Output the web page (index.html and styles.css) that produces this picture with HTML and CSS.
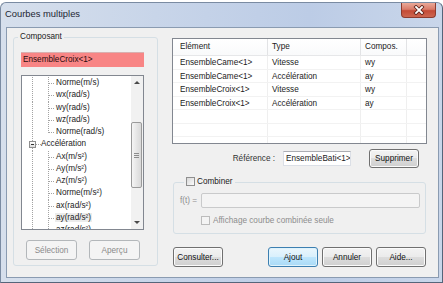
FILE: index.html
```html
<!DOCTYPE html>
<html lang="fr">
<head>
<meta charset="utf-8">
<title>Courbes multiples</title>
<link rel="stylesheet" href="styles.css">
</head>
<body>
<div class="window">
  <div class="titlebar">
    <span class="title">Courbes multiples</span>
    <div class="close">
      <svg width="12" height="10" viewBox="0 0 12 10"><path d="M3 2 L9 8 M9 2 L3 8" stroke="#5a2018" stroke-width="3.4" stroke-linecap="square" fill="none"/><path d="M3 2 L9 8 M9 2 L3 8" stroke="#ffffff" stroke-width="1.8" stroke-linecap="square" fill="none"/></svg>
    </div>
  </div>
  <div class="client">
    <div class="group composant">
      <span class="group-label">Composant</span>
      <div class="selected-field">EnsembleCroix&lt;1&gt;</div>
      <div class="tree">
        <div class="tree-items">
          <div class="trow child">Norme(m/s)</div>
          <div class="trow child">wx(rad/s)</div>
          <div class="trow child">wy(rad/s)</div>
          <div class="trow child">wz(rad/s)</div>
          <div class="trow child last">Norme(rad/s)</div>
          <div class="trow parent"><span class="expander"></span><span class="ptext">Accélération</span></div>
          <div class="trow child">Ax(m/s²)</div>
          <div class="trow child">Ay(m/s²)</div>
          <div class="trow child">Az(m/s²)</div>
          <div class="trow child">Norme(m/s²)</div>
          <div class="trow child">ax(rad/s²)</div>
          <div class="trow child"><span class="focus">ay(rad/s²)</span></div>
          <div class="trow child">az(rad/s²)</div>
        </div>
        <div class="vscroll">
          <div class="sb-btn"><span class="arrow-up"></span></div>
          <div class="sb-track"><div class="thumb"><span class="grip"></span></div></div>
          <div class="sb-btn"><span class="arrow-down"></span></div>
        </div>
      </div>
      <div class="btns-left">
        <button class="btn" disabled>Sélection</button>
        <button class="btn" disabled>Aperçu</button>
      </div>
    </div>

    <div class="right">
      <div class="listview">
        <div class="lv-row lv-head">
          <div class="cell first">Elément</div>
          <div class="cell">Type</div>
          <div class="cell">Compos.</div>
          <div class="cell"></div>
        </div>
        <div class="lv-row">
          <div class="cell first">EnsembleCame&lt;1&gt;</div>
          <div class="cell">Vitesse</div>
          <div class="cell">wy</div>
          <div class="cell"></div>
        </div>
        <div class="lv-row">
          <div class="cell first">EnsembleCame&lt;1&gt;</div>
          <div class="cell">Accélération</div>
          <div class="cell">ay</div>
          <div class="cell"></div>
        </div>
        <div class="lv-row">
          <div class="cell first">EnsembleCroix&lt;1&gt;</div>
          <div class="cell">Vitesse</div>
          <div class="cell">wy</div>
          <div class="cell"></div>
        </div>
        <div class="lv-row">
          <div class="cell first">EnsembleCroix&lt;1&gt;</div>
          <div class="cell">Accélération</div>
          <div class="cell">ay</div>
          <div class="cell"></div>
        </div>
        <div class="lv-row"><div class="cell"></div><div class="cell"></div><div class="cell"></div><div class="cell"></div></div>
        <div class="lv-row"><div class="cell"></div><div class="cell"></div><div class="cell"></div><div class="cell"></div></div>
        <div class="lv-row"><div class="cell"></div><div class="cell"></div><div class="cell"></div><div class="cell"></div></div>
      </div>

      <div class="ref-row">
        <span class="ref-label">Référence :</span>
        <div class="ref-input">EnsembleBati&lt;1&gt;</div>
        <button class="btn btn-sup">Supprimer</button>
      </div>

      <div class="group combiner">
        <span class="group-label check-label"><span class="checkbox"></span>Combiner</span>
        <div class="ft-row">
          <span class="ft-label">f(t) =</span>
          <div class="ft-input"></div>
        </div>
        <div class="check2-row">
          <span class="checkbox disabled"></span>
          <span class="check2-text">Affichage courbe combinée seule</span>
        </div>
      </div>

      <div class="bottom-buttons">
        <button class="btn">Consulter...</button>
        <span class="spacer"></span>
        <button class="btn default">Ajout</button>
        <button class="btn">Annuler</button>
        <button class="btn">Aide...</button>
      </div>
    </div>
  </div>
</div>
</body>
</html>
```

FILE: styles.css
```css
html, body {
  margin: 0;
  padding: 0;
  background: #ffffff;
}

body {
  font-family: "Liberation Sans", Arial, sans-serif;
  font-size: 8.2px;
  color: #1b1b1b;
}

.window {
  margin-top: 2px;
  width: 443px;
  height: 281px;
  box-sizing: border-box;
  border: 1px solid #7a8ba2;
  border-right-color: #55657a;
  border-bottom-color: #55657a;
  border-radius: 6px 6px 0 0;
  background: linear-gradient(to right, #d6dfec 0%, #c8d5e9 35%, #bccce6 70%, #c9d6ea 100%);
  display: flex;
  flex-direction: column;
}

.titlebar {
  height: 24px;
  flex: none;
  display: flex;
  justify-content: space-between;
  align-items: flex-start;
}

.title {
  font-size: 9.4px;
  line-height: 22px;
  padding-left: 4px;
  color: #1d2633;
}

.close {
  width: 35px;
  height: 15px;
  margin-right: 6px;
  box-sizing: border-box;
  border: 1px solid #8d3b2e;
  border-top: none;
  border-radius: 0 0 4px 4px;
  background: linear-gradient(#eaa999 0%, #d97b69 45%, #c44b36 55%, #cd6650 100%);
  display: flex;
  align-items: center;
  justify-content: center;
}

.client {
  flex: 1;
  margin: 0 3px 4px 5px;
  border: 1px solid #8a9bb1;
  background: #f0f0f0;
  display: flex;
  align-items: flex-start;
}

/* group boxes */
.group {
  position: relative;
  box-sizing: border-box;
  border: 1px solid #d5dfe5;
  border-radius: 3px;
}

.group-label {
  position: absolute;
  top: -7px;
  left: 4px;
  padding: 0 2px;
  line-height: 12px;
  background: #f0f0f0;
  white-space: nowrap;
}

.composant {
  margin: 9px 0 0 6px;
  width: 145px;
  height: 229px;
  padding: 14px 13px 0 7px;
}

.selected-field {
  height: 15px;
  box-sizing: border-box;
  background: #f88585;
  border-top: 1px solid #d9b0b0;
  padding-left: 2px;
  line-height: 14px;
  color: #2a0c0c;
  white-space: nowrap;
  overflow: hidden;
}

/* tree */
.tree {
  margin-top: 8px;
  height: 155px;
  box-sizing: border-box;
  border: 1px solid #828790;
  background: #ffffff;
  display: flex;
  overflow: hidden;
}

.tree-items {
  flex: 1;
  padding-top: 1px;
  overflow: hidden;
}

.trow {
  height: 12.25px;
  line-height: 12.25px;
  white-space: nowrap;
  background-repeat: no-repeat;
}

.trow.child {
  padding-left: 34px;
  background-image:
    repeating-linear-gradient(to bottom, #a3a3a3 0 1px, transparent 1px 2px),
    repeating-linear-gradient(to bottom, #a3a3a3 0 1px, transparent 1px 2px),
    repeating-linear-gradient(to right, #a3a3a3 0 1px, transparent 1px 2px);
  background-size: 1px 100%, 1px 100%, 6px 1px;
  background-position: 10px 0, 26px 0, 27px 6px;
}

.trow.child.last {
  background-size: 1px 100%, 1px 7px, 6px 1px;
}

.trow.parent {
  padding-left: 7px;
  display: flex;
  align-items: center;
  background-image:
    repeating-linear-gradient(to bottom, #a3a3a3 0 1px, transparent 1px 2px),
    repeating-linear-gradient(to right, #a3a3a3 0 1px, transparent 1px 2px);
  background-size: 1px 100%, 5px 1px;
  background-position: 10px 0, 14px 6px;
}

.expander {
  width: 7px;
  height: 7px;
  box-sizing: border-box;
  border: 1px solid #8e8e8e;
  background: linear-gradient(#ffffff, #dcdcdc);
  display: flex;
  align-items: center;
  justify-content: center;
}

.expander::after {
  content: "";
  width: 3px;
  height: 1px;
  background: #2f2f2f;
}

.ptext {
  margin-left: 5px;
}

.focus {
  background: #ececec;
  padding: 0 1px;
  margin-left: -1px;
}

.vscroll {
  width: 12px;
  flex: none;
  display: flex;
  flex-direction: column;
  background: #f1f1f1;
}

.sb-btn {
  height: 13px;
  flex: none;
  display: flex;
  align-items: center;
  justify-content: center;
}

.arrow-up {
  width: 0;
  height: 0;
  border-left: 3px solid transparent;
  border-right: 3px solid transparent;
  border-bottom: 3px solid #4a4a4a;
}

.arrow-down {
  width: 0;
  height: 0;
  border-left: 3px solid transparent;
  border-right: 3px solid transparent;
  border-top: 3px solid #4a4a4a;
}

.sb-track {
  flex: 1;
}

.thumb {
  margin: 33px 1px 0 0;
  height: 66px;
  box-sizing: border-box;
  border: 1px solid #9a9a9a;
  border-radius: 2px;
  background: linear-gradient(to right, #f5f5f5, #e6e6e6 50%, #d9d9d9);
  display: flex;
  align-items: center;
  justify-content: center;
}

.grip {
  width: 5px;
  height: 5px;
  background: repeating-linear-gradient(to bottom, #8c8c8c 0 1px, transparent 1px 2px);
}

/* buttons */
.btn {
  font: inherit;
  color: #111111;
  padding: 0;
  margin: 0;
  height: 20px;
  width: 50px;
  box-sizing: border-box;
  border: 1px solid #707070;
  border-radius: 3px;
  background: linear-gradient(#f3f3f3 0%, #ebebeb 50%, #dddddd 50%, #cfcfcf 100%);
  box-shadow: inset 0 0 0 1px #fbfbfb;
  white-space: nowrap;
}

.btn:disabled {
  border-color: #b3b7ba;
  background: #f4f4f4;
  color: #8a8a8a;
  box-shadow: none;
}

.btn.default {
  border-color: #3c7fb1;
  background: linear-gradient(#eaf6fd 0%, #d9f0fc 50%, #bee6fd 50%, #a9daf6 100%);
  box-shadow: inset 0 0 0 1px #dff3fc;
}

.btns-left {
  margin-top: 10px;
  display: flex;
  gap: 12px;
  padding-left: 5px;
}

.btns-left .btn {
  width: 51px;
}

/* right column */
.right {
  margin: 10px 0 0 14px;
  width: 255px;
  display: flex;
  flex-direction: column;
}

.listview {
  height: 106px;
  box-sizing: border-box;
  border: 1px solid #828790;
  background: #ffffff;
  overflow: hidden;
}

.lv-row {
  display: grid;
  grid-template-columns: 95px 93px 46px 1fr;
  height: 13.5px;
  box-sizing: border-box;
  border-bottom: 1px solid #f2f2f2;
}

.lv-row .cell {
  border-right: 1px solid #efefef;
  padding-left: 4px;
  line-height: 14px;
  white-space: nowrap;
  overflow: hidden;
}

.lv-row .cell.first {
  padding-left: 7px;
}

.lv-row .cell:last-child {
  border-right: none;
}

.lv-head {
  height: 17px;
  border-bottom: 1px solid #e6e7e9;
  background: linear-gradient(#ffffff, #f9fafb);
}

.lv-head .cell {
  line-height: 16px;
  border-right-color: #e2e3e5;
}

.ref-row {
  margin-top: 5px;
  height: 19px;
  display: flex;
  align-items: center;
  justify-content: flex-end;
  padding-right: 8px;
}

.ref-label {
  margin-right: 8px;
  color: #333333;
}

.ref-input {
  width: 68px;
  height: 15px;
  box-sizing: border-box;
  margin-right: 18px;
  background: #ffffff;
  border: 1px solid #dbdfe6;
  border-top-color: #abadb3;
  padding-left: 2px;
  line-height: 13px;
  white-space: nowrap;
  overflow: hidden;
}

.btn-sup {
  height: 19px;
}

.combiner {
  margin: 14px 1px 0;
  height: 52px;
  padding: 10px 5px 0 6px;
}

.check-label {
  left: 10px;
  line-height: 11px;
  top: -7px;
  display: flex;
  align-items: center;
}

.checkbox {
  width: 9px;
  height: 9px;
  box-sizing: border-box;
  border: 1px solid #8f8f8f;
  background: linear-gradient(135deg, #d8d8d8, #fbfbfb);
  margin-right: 2px;
  flex: none;
}

.checkbox.disabled {
  border-color: #bcbcbc;
  background: #f4f4f4;
  margin-right: 3px;
}

.ft-row {
  display: flex;
  align-items: center;
}

.ft-label {
  width: 21px;
  flex: none;
  color: #8d8d8d;
  white-space: nowrap;
}

.ft-input {
  flex: 1;
  height: 15px;
  box-sizing: border-box;
  border: 1px solid #c9cacb;
  border-radius: 2px;
  background: #f4f4f4;
}

.check2-row {
  margin-top: 8px;
  padding-left: 21px;
  display: flex;
  align-items: center;
}

.check2-text {
  color: #8d8d8d;
  white-space: nowrap;
}

.bottom-buttons {
  margin-top: 13px;
  padding: 0 1px;
  display: flex;
  gap: 4px;
}

.spacer {
  flex: 1;
}
```
